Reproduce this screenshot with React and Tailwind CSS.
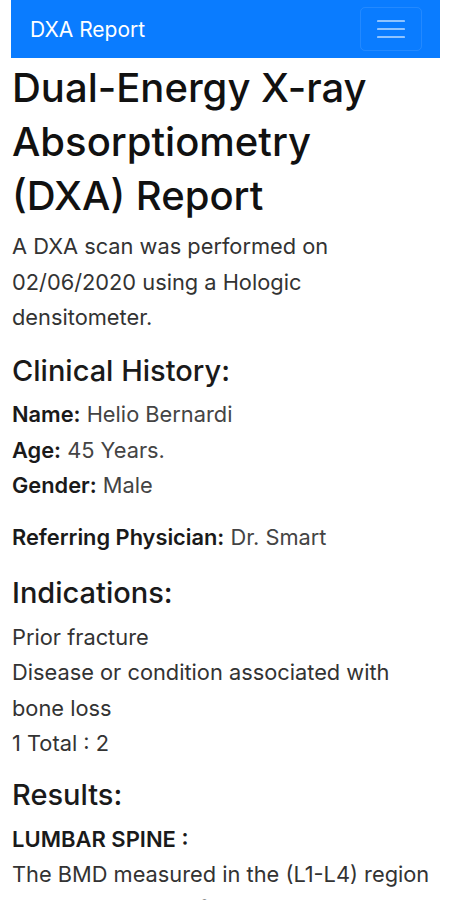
import React from "react";

export default function App() {
  return (
    <div className="min-h-[900px] bg-white text-[#212529]" style={{ fontFamily: "Inter, Roboto, 'Liberation Sans', sans-serif" }}>
      <nav className="ml-[11px] w-[429px] h-[58px] bg-[#0a7cff] flex items-center justify-between pl-[19px] pr-[18px]">
        <span className="text-white text-[21px] leading-none">DXA Report</span>
        <button className="w-[62px] h-[44px] border border-white/10 rounded-[5px] flex items-center justify-center">
          <svg width="28" height="20" viewBox="0 0 28 20">
            <g stroke="rgba(255,255,255,0.55)" strokeWidth="2.2" strokeLinecap="round">
              <line x1="1" y1="2" x2="27" y2="2" />
              <line x1="1" y1="10" x2="27" y2="10" />
              <line x1="1" y1="18" x2="27" y2="18" />
            </g>
          </svg>
        </button>
      </nav>
      <main className="pl-[12px] pr-[10px]">
        <h1 className="text-[40px] leading-[54px] mt-[3px] pr-[16px] font-medium text-[#111]">
          Dual-Energy X-ray Absorptiometry (DXA) Report
        </h1>
        <p className="text-[21.8px] leading-[35.5px] text-[#333] mt-[6px]">
          A DXA scan was performed on 02/06/2020 using a Hologic densitometer.
        </p>
        <h3 className="text-[29px] leading-[35px] mt-[17.5px] font-medium text-[#1a1a1a]">Clinical History:</h3>
        <div className="text-[21.8px] leading-[35.5px] text-[#444] mt-[9px]">
          <div><b className="font-semibold text-[#1a1a1a]">Name:</b> Helio Bernardi</div>
          <div><b className="font-semibold text-[#1a1a1a]">Age:</b> 45 Years.</div>
          <div><b className="font-semibold text-[#1a1a1a]">Gender:</b> Male</div>
        </div>
        <div className="text-[21.8px] leading-[35.5px] text-[#444] mt-[16.5px]">
          <b className="font-semibold text-[#1a1a1a]">Referring Physician:</b> Dr. Smart
        </div>
        <h3 className="text-[29px] leading-[35px] mt-[19px] font-medium text-[#1a1a1a]">Indications:</h3>
        <div className="text-[21.8px] leading-[35.5px] text-[#333] mt-[10px]">
          <div>Prior fracture</div>
          <div>Disease or condition associated with bone loss</div>
          <div>1 Total : 2</div>
        </div>
        <h3 className="text-[29px] leading-[35px] mt-[15.5px] font-medium text-[#1a1a1a]">Results:</h3>
        <div className="text-[22px] leading-[35.5px] font-semibold text-[#1a1a1a] mt-[9.5px]">LUMBAR SPINE :</div>
        <div className="text-[21.8px] leading-[35.5px] text-[#333]">
          The BMD measured in the (L1-L4) region measures 1.1 g/cm²
        </div>
      </main>
    </div>
  );
}
